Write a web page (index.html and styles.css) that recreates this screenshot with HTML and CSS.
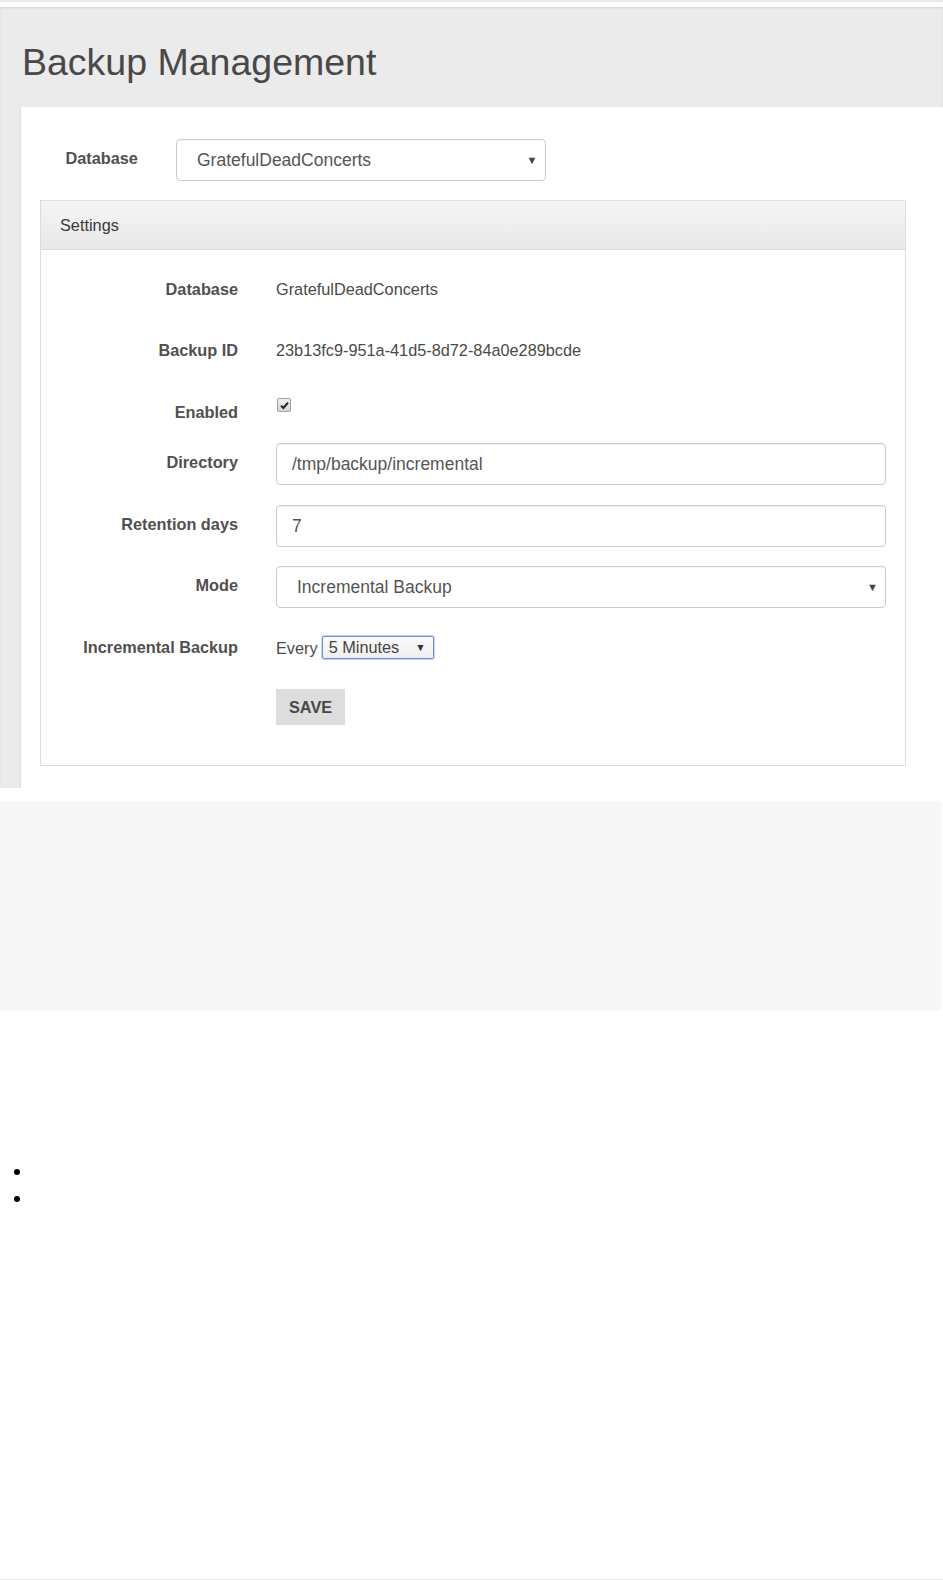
FILE: index.html
```html
<!DOCTYPE html>
<html>
<head>
<meta charset="utf-8">
<title>Backup Management</title>
<link rel="stylesheet" href="styles.css">
</head>
<body>
<div class="page">
  <div class="topbar"></div>
  <div class="header">
    <h1 class="title">Backup Management</h1>
    <div class="content">
      <div class="db-row">
        <div class="db-label">Database</div>
        <div class="fake-select db-select">
          <span class="sel-text">GratefulDeadConcerts</span>
          <span class="caret">&#9660;</span>
        </div>
      </div>
      <div class="panel">
        <div class="panel-heading">Settings</div>
        <div class="panel-body">
          <div class="row r42">
            <div class="label">Database</div>
            <div class="value">GratefulDeadConcerts</div>
          </div>
          <div class="row r42">
            <div class="label">Backup ID</div>
            <div class="value">23b13fc9-951a-41d5-8d72-84a0e289bcde</div>
          </div>
          <div class="row r31">
            <div class="label">Enabled</div>
            <div class="value">
              <span class="checkbox"><svg width="9" height="9" viewBox="0 0 9 9"><path d="M1 4.6 L3.4 7 L8 1.6" fill="none" stroke="#222" stroke-width="2"/></svg></span>
            </div>
          </div>
          <div class="row r42">
            <div class="label">Directory</div>
            <div class="field"><div class="input">/tmp/backup/incremental</div></div>
          </div>
          <div class="row r42">
            <div class="label">Retention days</div>
            <div class="field"><div class="input">7</div></div>
          </div>
          <div class="row r42">
            <div class="label">Mode</div>
            <div class="field">
              <div class="fake-select mode-select">
                <span class="sel-text">Incremental Backup</span>
                <span class="caret">&#9660;</span>
              </div>
            </div>
          </div>
          <div class="row r42">
            <div class="label">Incremental Backup</div>
            <div class="value every">
              <span>Every</span>
              <span class="mini-select"><span>5 Minutes</span><span class="mini-caret">&#9660;</span></span>
            </div>
          </div>
          <div class="row r36">
            <div></div>
            <div class="field"><button class="save">SAVE</button></div>
          </div>
        </div>
      </div>
    </div>
  </div>
  <div class="gray-block"></div>
  <ul class="list">
    <li>&nbsp;</li>
    <li>&nbsp;</li>
  </ul>
  <div class="bottom-line"></div>
</div>
</body>
</html>
```

FILE: styles.css
```css
html, body {
  margin: 0;
  padding: 0;
  background: #fff;
}
body {
  font-family: "Liberation Sans", Arial, sans-serif;
  font-size: 16.3px;
  color: #4a4a4a;
}
.page {
  min-height: 1580px;
  display: flex;
  flex-direction: column;
}
.topbar {
  height: 2px;
  background: #ebebeb;
  margin-bottom: 5px;
}
.header {
  background: #ebebeb;
  box-shadow: inset 0 1px 2px rgba(0,0,0,0.10);
  padding-top: 33px;
}
.title {
  margin: 0 0 23px 22px;
  font-size: 37.5px;
  line-height: 44px;
  font-weight: normal;
  color: #484848;
}
.content {
  margin-left: 21px;
  background: #fff;
  box-shadow: -1px 0 1px rgba(0,0,0,0.05);
  padding: 32px 37px 22px 19px;
}
.db-row {
  display: flex;
  align-items: flex-start;
  padding-left: 25.5px;
}
.db-label {
  width: 110px;
  font-weight: bold;
  line-height: 20px;
  padding-top: 9px;
  color: #505050;
}
.fake-select {
  box-sizing: border-box;
  height: 42px;
  border: 1px solid #ccc;
  border-radius: 4px;
  background: #fff;
  display: flex;
  align-items: center;
  justify-content: space-between;
  font-size: 17.5px;
  color: #555;
  box-shadow: inset 0 1px 1px rgba(0,0,0,0.04);
}
.db-select {
  width: 370px;
  padding: 0 7px 0 20.5px;
}
.caret {
  font-size: 11px;
  color: #444;
}
.panel {
  margin-top: 19px;
  border: 1px solid #ddd;
  background: #fff;
}
.panel-heading {
  height: 49px;
  box-sizing: border-box;
  border-bottom: 1px solid #ddd;
  background: linear-gradient(#f5f5f5, #e8e8e8);
  padding-left: 19px;
  line-height: 48px;
  color: #3a3a3a;
}
.panel-body {
  padding: 19.6px 19px 40px 0;
  display: flex;
  flex-direction: column;
  gap: 19.5px;
}
.row {
  display: grid;
  grid-template-columns: 197px 1fr;
  column-gap: 38px;
  align-items: start;
}
.r42 { height: 42px; }
.r31 { height: 31px; }
.r36 { height: 36px; }
.label {
  text-align: right;
  font-weight: bold;
  line-height: 20px;
  padding-top: 9.4px;
  color: #505050;
}
.value {
  line-height: 20px;
  padding-top: 9.4px;
  color: #4a4a4a;
}
.checkbox {
  display: block;
  box-sizing: border-box;
  width: 14px;
  height: 14px;
  margin-top: -3.5px;
  margin-left: 1px;
  border: 1px solid #a0a0a0;
  border-radius: 2px;
  background: linear-gradient(#f0f0f0, #d6d6d6);
}
.checkbox svg {
  display: block;
  margin: 1.5px 0 0 1.5px;
}
.input {
  box-sizing: border-box;
  height: 42px;
  border: 1px solid #ccc;
  border-radius: 4px;
  padding-left: 15px;
  line-height: 40px;
  font-size: 17.5px;
  color: #555;
  box-shadow: inset 0 1px 1px rgba(0,0,0,0.06);
}
.mode-select {
  width: 100%;
  padding: 0 7px 0 20px;
}
.every {
  display: flex;
  align-items: center;
  gap: 4px;
}
.mini-select {
  box-sizing: border-box;
  width: 112px;
  height: 23px;
  margin-top: -1px;
  border: 1px solid #6f92d0;
  border-radius: 2px;
  box-shadow: 0 0 0 1px rgba(120,160,220,0.45);
  background: linear-gradient(#fbfbfb, #efefef);
  display: flex;
  align-items: center;
  justify-content: space-between;
  padding: 0 7px 0 6px;
  line-height: 20px;
  color: #444;
}
.mini-caret {
  font-size: 10.5px;
  color: #333;
}
.save {
  height: 36px;
  padding: 0 13px;
  border: none;
  background: #ddd;
  color: #484848;
  font-family: "Liberation Sans", Arial, sans-serif;
  font-size: 16.3px;
  font-weight: bold;
}
.gray-block {
  margin-top: 13px;
  height: 210px;
  width: calc(100% - 2px);
  background: #f7f7f7;
}
.list {
  margin: 146px 0 0 0;
  padding-left: 32px;
  line-height: 27px;
  font-size: 19px;
  color: #000;
}
.bottom-line {
  margin-top: auto;
  height: 1px;
  background: #e8e8e8;
}
```
